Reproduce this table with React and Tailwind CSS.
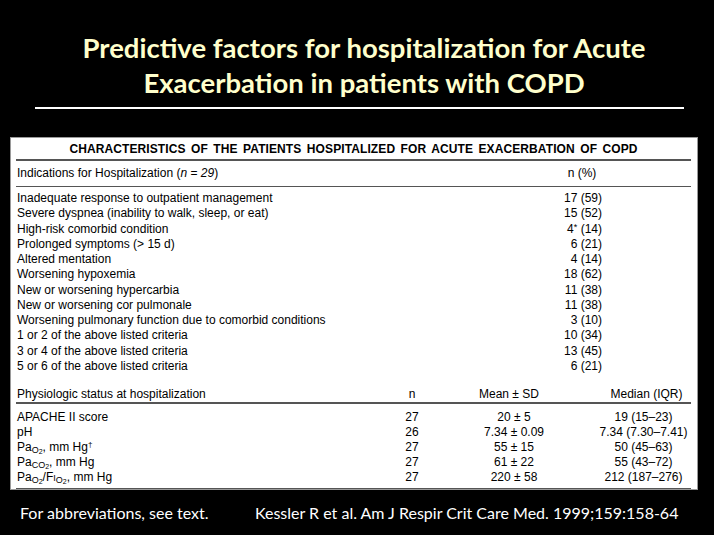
import React from 'react';

const topRows = [
  ['Inadequate response to outpatient management', '17 (59)'],
  ['Severe dyspnea (inability to walk, sleep, or eat)', '15 (52)'],
  ['High-risk comorbid condition', <>4<span className="text-[9px] relative top-[-3px]">*</span> (14)</>],
  ['Prolonged symptoms (> 15 d)', '6 (21)'],
  ['Altered mentation', '4 (14)'],
  ['Worsening hypoxemia', '18 (62)'],
  ['New or worsening hypercarbia', '11 (38)'],
  ['New or worsening cor pulmonale', '11 (38)'],
  ['Worsening pulmonary function due to comorbid conditions', '3 (10)'],
  ['1 or 2 of the above listed criteria', '10 (34)'],
  ['3 or 4 of the above listed criteria', '13 (45)'],
  ['5 or 6 of the above listed criteria', '6 (21)'],
];

// small subscript gas label, e.g. O2 / CO2
const Gas = ({ g }) => (
  <span className="text-[9px] relative top-[2px]">
    {g}
    <span className="text-[7px] relative top-[1px]">2</span>
  </span>
);

const lowRows = [
  ['APACHE II score', '27', '20 ± 5', '19 (15–23)'],
  ['pH', '26', '7.34 ± 0.09', '7.34 (7.30–7.41)'],
  [<>Pa<Gas g="O" />, mm Hg<span className="text-[8px] relative top-[-4px]">†</span></>, '27', '55 ± 15', '50 (45–63)'],
  [<>Pa<Gas g="CO" />, mm Hg</>, '27', '61 ± 22', '55 (43–72)'],
  [<>Pa<Gas g="O" />/F<span className="text-[9px]">I</span><Gas g="O" />, mm Hg</>, '27', '220 ± 58', '212 (187–276)'],
];

export default function App() {
  return (
    <div className="w-[714px] h-[535px] bg-black overflow-hidden flex flex-col">
      {/* title */}
      <div className="pt-[30px] pl-[14px] text-center text-[#ffffcc] font-bold text-[27.5px] leading-[35px] font-['Lato',sans-serif]">
        Predictive factors for hospitalization for Acute
        <br />
        Exacerbation in patients with COPD
      </div>
      <div className="ml-[35px] w-[649px] h-[2px] bg-white mt-[7px]" />

      {/* table image */}
      <div className="ml-[10px] mt-[28px] w-[688px] h-[353px] bg-white border border-[#9a9a9a] pl-[5px] pr-[6px] text-[12px] text-black font-['Liberation_Sans',Arial,sans-serif]">
        <div className="h-[21px] flex items-center justify-center font-bold tracking-[0.1px] [word-spacing:2px] text-[12px]">
          CHARACTERISTICS OF THE PATIENTS HOSPITALIZED FOR ACUTE EXACERBATION OF COPD
        </div>
        <div className="h-[1.5px] bg-[#555]" />
        <div className="h-[25px] flex items-center">
          <span className="flex-1 pl-[1px]">
            Indications for Hospitalization (<i>n</i> = <i>29</i>)
          </span>
          <span className="w-[40px] mr-[89px] text-center">n (%)</span>
        </div>
        <div className="h-[1.5px] bg-[#555]" />
        <div className="pt-[4px]">
          {topRows.map(([label, val], i) => (
            <div key={i} className="h-[15.25px] leading-[15.25px] flex">
              <span className="flex-1 pl-[1px]">{label}</span>
              <span className="w-[50px] mr-[89px] text-right">{val}</span>
            </div>
          ))}
        </div>
        <div className="mt-[11px] h-[17px] flex items-center">
          <span className="w-[376px] pl-[1px]">Physiologic status at hospitalization</span>
          <span className="w-[40px] text-center">n</span>
          <span className="ml-[30px] w-[104px] text-center pr-[10px]">Mean ± SD</span>
          <span className="ml-[30px] w-[95px] text-center pl-[6px]">Median (IQR)</span>
        </div>
        <div className="h-[1.5px] bg-[#555]" />
        <div className="pt-[6px]">
          {lowRows.map(([label, n, mean, med], i) => (
            <div key={i} className="h-[15px] leading-[15px] flex">
              <span className="w-[376px] pl-[1px]">{label}</span>
              <span className="w-[40px] text-center">{n}</span>
              <span className="ml-[30px] w-[104px] text-center">{mean}</span>
              <span className="ml-[30px] w-[95px] text-center">{med}</span>
            </div>
          ))}
        </div>
        <div className="mt-[3px] h-[1.5px] bg-[#555]" />
      </div>

      {/* footer */}
      <div className="mt-[13px] flex text-white text-[16px] leading-[20px] font-['Lato',sans-serif]">
        <span className="ml-[20px] w-[235px]">For abbreviations, see text.</span>
        <span>Kessler R et al. Am J Respir Crit Care Med. 1999;159:158-64</span>
      </div>
    </div>
  );
}
